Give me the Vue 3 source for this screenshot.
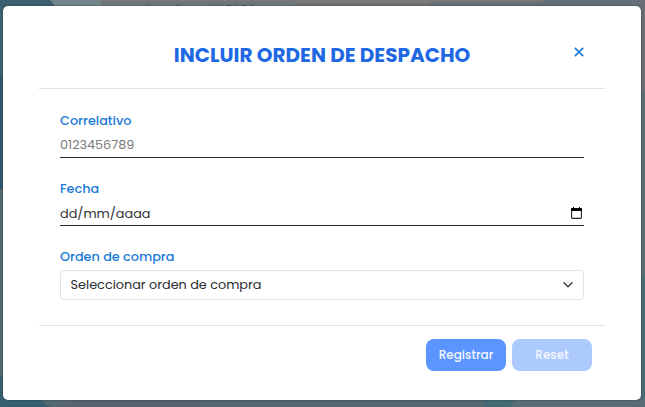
<script setup>
const fields = [
  { id: 'correlativo', label: 'Correlativo', text: '0123456789', kind: 'number' },
  { id: 'fecha', label: 'Fecha', text: 'dd/mm/aaaa', kind: 'date' },
]
</script>

<template>
  <main class="screen">
    <svg class="backdrop" viewBox="0 0 645 407" aria-hidden="true">
      <rect width="645" height="407" fill="#546870" />
      <path d="M0 0H53L70 12H0Z" fill="#3c5f70" />
      <path d="M0 0H4V75H0Z" fill="#3f6070" />
      <path d="M0 75H4V189H0Z" fill="#2f566b" />
      <path d="M0 189H4V376H0Z" fill="#53686f" />
      <path d="M0 376H10L42 401L50 407H0Z" fill="#37606f" />
      <path d="M50 0H101V7H56Z" fill="#718589" />
      <path d="M101 0H543V2H455V6H101Z" fill="#797979" />
      <path d="M101 1H295V7H101Z" fill="#6c7679" />
      <path d="M295 3H430V7H295Z" fill="#766f70" />
      <path d="M430 2H645V7H430Z" fill="#666e78" />
      <path d="M543 0H645V7H543Z" fill="#666e78" />
      <path d="M148 5.5h2m27 0h3m31 0h1m4 0h1m10 0h4m5 0h2m4 0h4m5 0h2" stroke="#494a61" />
      <path d="M641 0H645V90H641Z" fill="#686e73" />
      <path d="M641 90H645V276H641Z" fill="#5c6e75" />
      <path d="M641 276H645V407H641Z" fill="#4b6b75" />
      <path d="M70 400H200V407H58Z" fill="#566570" />
      <path d="M484 400H515L510 407H485Z" fill="#446a74" />
      <path d="M515 400H645V407H510Z" fill="#586d74" />
    </svg>

    <section class="modal" role="dialog" aria-labelledby="modal-title">
      <header class="modal-header">
        <h1 id="modal-title">INCLUIR ORDEN DE DESPACHO</h1>
        <button class="close" type="button" aria-label="Cerrar">
          <svg width="10" height="10" viewBox="0 0 10 10">
            <path d="M.8 .8L9.2 9.2M9.2 .8L.8 9.2" fill="none" stroke="#1c7bd3" stroke-width="1.7" />
          </svg>
        </button>
      </header>

      <div class="modal-body">
        <div v-for="field in fields" :key="field.id" class="field">
          <span class="label">{{ field.label }}</span>
          <div class="line-input" :class="field.kind">
            <span>{{ field.text }}</span>
            <svg v-if="field.kind === 'date'" width="11" height="12" viewBox="0 0 11 12">
              <path d="M2 0H3V1H8V0H9V1H10.3A.7 .7 0 0 1 11 1.7V4H0V1.7A.7 .7 0 0 1 .7 1H2Z" fill="#000" />
              <path d="M.6 4V10.6Q.6 11.4 1.4 11.4H9.6Q10.4 11.4 10.4 10.6V4" fill="none" stroke="#222" stroke-width="1.1" />
            </svg>
          </div>
        </div>
        <div class="field">
          <span class="label">Orden de compra</span>
          <div class="select">
            <span>Seleccionar orden de compra</span>
            <svg width="10" height="6" viewBox="0 0 10 6">
              <path d="M1 .8L5 4.8L9 .8" fill="none" stroke="#343a40" stroke-width="1.4" stroke-linecap="round" stroke-linejoin="round" />
            </svg>
          </div>
        </div>
      </div>

      <footer class="modal-footer">
        <button class="btn" type="button">Registrar</button>
        <button class="btn muted" type="button">Reset</button>
      </footer>
    </section>
  </main>
</template>

<style>
body {
  margin: 0;
  overflow: hidden;
}
</style>

<style scoped>
.screen {
  position: relative;
  box-sizing: border-box;
  width: 645px;
  height: 407px;
  padding: 6px 4px 7px 3px;
  overflow: hidden;
  font-family: Poppins, Inter, "Liberation Sans", sans-serif;
  font-size: 12.8px;
}
.backdrop {
  position: absolute;
  inset: 0;
  width: 645px;
  height: 407px;
}
.modal {
  position: relative;
  box-sizing: border-box;
  height: 394px;
  padding: 0 36px;
  border-radius: 5px;
  background: #fff;
  box-shadow: 0 0 2px #263b45;
}
.modal-header {
  display: grid;
  grid-template-columns: 30px 1fr 30px;
  align-items: center;
  box-sizing: border-box;
  height: 83px;
  padding-top: 15px;
  border-bottom: 1px solid #dee2e6;
}
h1 {
  grid-column: 2;
  margin: 0;
  color: #2068e3;
  font-size: 20px;
  line-height: 30px;
  font-weight: 700;
  text-align: center;
  white-space: nowrap;
}
button {
  border: 0;
  padding: 0;
  font-family: inherit;
}
.close {
  display: flex;
  margin: -6px 0 0 -1px;
  background: none;
}
.modal-body {
  box-sizing: border-box;
  height: 237px;
  padding: 22px 21px 0;
  border-bottom: 1px solid #dee2e6;
}
.field {
  height: 68px;
}
.label {
  display: block;
  height: 20px;
  color: #1c7bd7;
  font-weight: 500;
  line-height: 20px;
}
.line-input {
  display: flex;
  align-items: center;
  justify-content: space-between;
  box-sizing: border-box;
  height: 27px;
  padding: 2px 2px 0 0;
  border-bottom: 1px solid #292929;
  color: #7b7b7b;
}
.line-input.date {
  padding-top: 3px;
  color: #333;
}
.line-input svg {
  margin-bottom: 1px;
}
.select {
  display: flex;
  align-items: center;
  justify-content: space-between;
  box-sizing: border-box;
  height: 30px;
  margin-top: 3px;
  padding: 0 10.5px 0 9.6px;
  border: 1px solid #dee2e6;
  border-radius: 4px;
  color: #292d31;
}
.modal-footer {
  display: flex;
  justify-content: flex-end;
  gap: 6px;
  padding: 13px 13px 0 0;
}
.btn {
  width: 80px;
  height: 32px;
  border-radius: 8px;
  background: #5b95ff;
  color: #f3f7ff;
  font-size: 12px;
  font-weight: 500;
}
.muted {
  background: #adcaff;
}
</style>
